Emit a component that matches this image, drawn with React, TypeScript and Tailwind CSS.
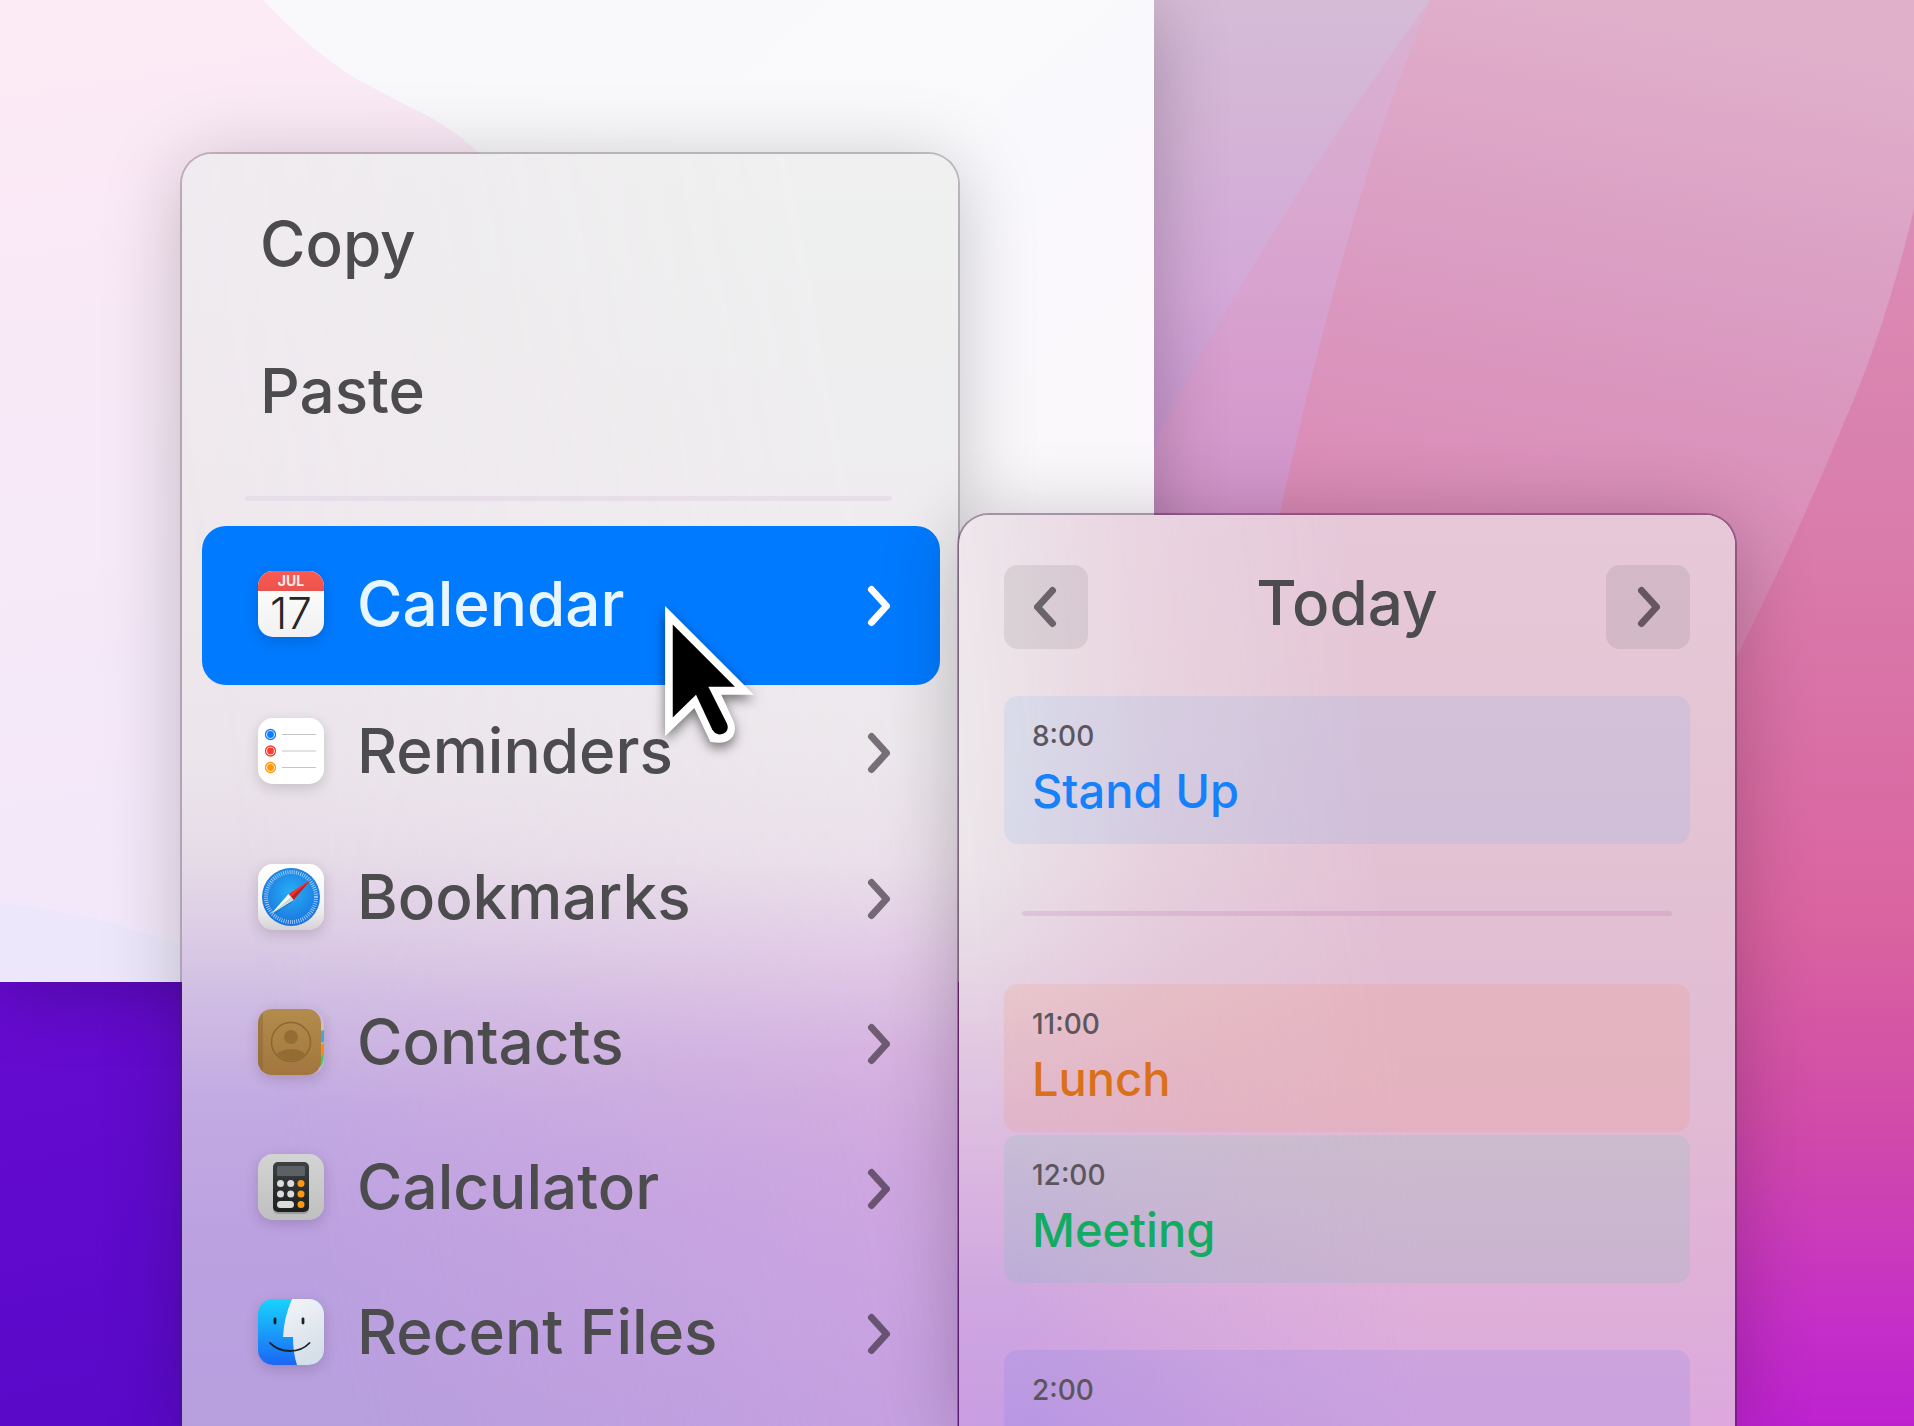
import type { ReactNode } from "react";
import clsx from "clsx";

type MenuEntry = {
  label: string;
  icon: ReactNode;
  active?: boolean;
  height: string;
};

type CalendarEvent = {
  time: string;
  title?: string;
  card: string;
  text: string;
};

const Chevron: React.FC<{ className?: string; flip?: boolean }> = ({
  className,
  flip,
}) => (
  <svg
    viewBox="0 0 24 42"
    className={clsx("h-[42px] w-6 shrink-0", className)}
    fill="none"
    stroke="currentColor"
    strokeWidth={7}
    strokeLinecap="round"
    strokeLinejoin="round"
    aria-hidden="true"
  >
    <path d={flip ? "M18.500 4.500 3.500 21l15 16.500" : "M5.500 4.500 20.500 21 5.500 37.500"} />
  </svg>
);

/* App icons */

const CalendarIcon = () => (
  <svg viewBox="0 0 66 66" className="size-full overflow-visible" aria-hidden="true">
    <defs>
      <clipPath id="cal-clip">
        <rect width="66" height="66" rx="15" />
      </clipPath>
      <linearGradient id="cal-paper" x1="0" y1="0" x2="0" y2="1">
        <stop offset="0" stopColor="#ffffff" />
        <stop offset="1" stopColor="#f1f1f1" />
      </linearGradient>
      <linearGradient id="cal-red" x1="0" y1="0" x2="0" y2="1">
        <stop offset="0" stopColor="#fb5a50" />
        <stop offset="1" stopColor="#e9544e" />
      </linearGradient>
    </defs>
    <g clipPath="url(#cal-clip)">
      <rect width="66" height="66" fill="url(#cal-paper)" />
      <rect width="66" height="20" fill="url(#cal-red)" />
    </g>
    <text x="33" y="15" textAnchor="middle" fontSize="14" fontWeight="700" fill="#fdeceb">
      JUL
    </text>
    <text x="33" y="58" textAnchor="middle" fontSize="44" fontWeight="300" fill="#262626">
      17
    </text>
  </svg>
);

const RemindersIcon = () => (
  <svg viewBox="0 0 66 66" className="size-full" aria-hidden="true">
    <rect width="66" height="66" rx="15" fill="#fff" />
    {[
      { y: 16.5, color: "#0a7cff" },
      { y: 33, color: "#fb3b30" },
      { y: 49.5, color: "#ff9706" },
    ].map(({ y, color }) => (
      <g key={color}>
        <circle cx="12.500" cy={y} r="5" fill="none" stroke={color} strokeWidth="1.300" />
        <circle cx="12.500" cy={y} r="3.400" fill={color} />
        <path d={`M24 ${y}H58`} stroke="#c3c5c5" strokeWidth="1.200" />
      </g>
    ))}
  </svg>
);

const SafariIcon = () => (
  <svg viewBox="0 0 66 66" className="size-full" aria-hidden="true">
    <defs>
      <linearGradient id="saf-bg" x1="0" y1="0" x2="0" y2="1">
        <stop offset="0" stopColor="#ffffff" />
        <stop offset="0.6" stopColor="#f4f4f4" />
        <stop offset="1" stopColor="#d6d3d8" />
      </linearGradient>
      <radialGradient id="saf-dial" cx="0.5" cy="0.42" r="0.6">
        <stop offset="0" stopColor="#25b0f5" />
        <stop offset="1" stopColor="#1b6fde" />
      </radialGradient>
    </defs>
    <rect width="66" height="66" rx="15" fill="url(#saf-bg)" />
    <circle cx="33" cy="33" r="29" fill="url(#saf-dial)" />
    <circle
      cx="33"
      cy="33"
      r="25"
      fill="none"
      stroke="#d9efff"
      strokeWidth="4"
      strokeDasharray="0.8 1.382"
      opacity="0.8"
    />
    <path d="M14 51 33 39 38 32 20 48z" fill="#0b3f86" opacity="0.35" />
    <path d="M52.500 16 30.500 30 35.500 36z" fill="#f2302c" />
    <path d="M52.500 16 33 33 35.500 36z" fill="#c4201f" />
    <path d="M13.500 49.500 30.500 30 35.500 36z" fill="#ffffff" />
    <path d="M13.500 49.500 33 33 35.500 36z" fill="#cfd6dc" />
  </svg>
);

const ContactsIcon = () => (
  <svg viewBox="0 0 66 66" className="size-full" aria-hidden="true">
    <defs>
      <linearGradient id="con-cover" x1="0" y1="0" x2="0" y2="1">
        <stop offset="0" stopColor="#b38c4d" />
        <stop offset="1" stopColor="#a2763e" />
      </linearGradient>
      <clipPath id="con-clip">
        <rect width="63" height="66" rx="14" />
      </clipPath>
      <clipPath id="con-ring">
        <circle cx="33" cy="33" r="18.500" />
      </clipPath>
    </defs>
    <path d="M56 12h6q3 2 4 9v28q-1 7-5 10h-5z" fill="#cfc2b4" />
    <path d="M60 23l6-2v12l-6 2z" fill="#3fa9dd" />
    <path d="M60 36l6-2v11l-6 3z" fill="#fb8c0a" />
    <path d="M60 48l6-3q0 9-4 13h-2z" fill="#42cf62" />
    <g clipPath="url(#con-clip)">
      <rect width="63" height="66" fill="url(#con-cover)" />
      <path d="M0 0h5v66H0z" fill="#7f5c29" opacity="0.35" />
    </g>
    <g clipPath="url(#con-ring)">
      <circle cx="33" cy="28" r="7" fill="#8c6830" opacity="0.8" />
      <ellipse cx="33" cy="49" rx="16" ry="9" fill="#8c6830" opacity="0.8" />
    </g>
    <circle cx="33" cy="33" r="19.500" fill="none" stroke="#8c6830" strokeWidth="1.500" />
  </svg>
);

const CalculatorIcon = () => (
  <svg viewBox="0 0 66 66" className="size-full" aria-hidden="true">
    <defs>
      <linearGradient id="calc-bg" x1="0" y1="0" x2="0" y2="1">
        <stop offset="0" stopColor="#d3d4d4" />
        <stop offset="1" stopColor="#c0bfc0" />
      </linearGradient>
      <linearGradient id="calc-body" x1="0" y1="0" x2="0" y2="1">
        <stop offset="0" stopColor="#3d4143" />
        <stop offset="1" stopColor="#1d1f20" />
      </linearGradient>
    </defs>
    <rect width="66" height="66" rx="15" fill="url(#calc-bg)" />
    <rect x="15" y="9" width="36" height="51" rx="5" fill="#000" opacity="0.2" />
    <rect x="15" y="8" width="36" height="50" rx="5" fill="url(#calc-body)" />
    <rect x="19" y="12" width="28" height="10" rx="1.500" fill="#5b6164" />
    {[29.5, 40].map((y) => (
      <g key={y}>
        <circle cx="22.500" cy={y} r="3.500" fill="#dcdcdc" />
        <circle cx="32.700" cy={y} r="3.500" fill="#dcdcdc" />
        <circle cx="43" cy={y} r="3.500" fill="#ff9a10" />
      </g>
    ))}
    <rect x="19" y="47" width="17" height="7" rx="3.500" fill="#dcdcdc" />
    <circle cx="43" cy="50.500" r="3.500" fill="#ff9a10" />
  </svg>
);

const FinderIcon = () => (
  <svg viewBox="0 0 66 66" className="size-full" aria-hidden="true">
    <defs>
      <clipPath id="fin-clip">
        <rect width="66" height="66" rx="15" />
      </clipPath>
      <linearGradient id="fin-blue" x1="0" y1="0" x2="0" y2="1">
        <stop offset="0" stopColor="#19d3fd" />
        <stop offset="1" stopColor="#1b66f5" />
      </linearGradient>
      <linearGradient id="fin-face" x1="0" y1="0" x2="0.300" y2="1">
        <stop offset="0" stopColor="#f4f4f7" />
        <stop offset="1" stopColor="#d5dfe9" />
      </linearGradient>
    </defs>
    <g clipPath="url(#fin-clip)">
      <rect width="66" height="66" fill="url(#fin-blue)" />
      <path d="M34 0Q26 18 25 38h10Q35 54 39 66h27V0z" fill="url(#fin-face)" />
    </g>
    <path
      d="M17 20v4M45 20v4"
      stroke="#18222c"
      strokeWidth="2.800"
      strokeLinecap="round"
    />
    <path
      d="M12 44Q20 52 32 52T51.500 44"
      fill="none"
      stroke="#18222c"
      strokeWidth="1.800"
      strokeLinecap="round"
    />
  </svg>
);

const editActions = ["Copy", "Paste"];

const menuEntries: MenuEntry[] = [
  { label: "Calendar", icon: <CalendarIcon />, active: true, height: "h-[159px]" },
  { label: "Reminders", icon: <RemindersIcon />, height: "h-[147px]" },
  { label: "Bookmarks", icon: <SafariIcon />, height: "h-[145px]" },
  { label: "Contacts", icon: <ContactsIcon />, height: "h-[145px]" },
  { label: "Calculator", icon: <CalculatorIcon />, height: "h-[145px]" },
  { label: "Recent Files", icon: <FinderIcon />, height: "h-[145px]" },
];

const morning: CalendarEvent[] = [
  { time: "8:00", title: "Stand Up", card: "bg-[#3c9cff]/10", text: "text-[#1681fb]" },
];

const midday: CalendarEvent[] = [
  { time: "11:00", title: "Lunch", card: "bg-[#ff7a38]/12", text: "text-[#d9701a]" },
  { time: "12:00", title: "Meeting", card: "bg-[#3cd0a0]/12", text: "text-[#12ab61]" },
];

const afternoon: CalendarEvent[] = [
  { time: "2:00", card: "bg-[#6e7aee]/15", text: "text-[#5856d6]" },
];

/* Desktop wallpaper */
const Wallpaper = () => (
  <svg
    viewBox="0 0 1914 1426"
    preserveAspectRatio="none"
    className="absolute inset-0 size-full"
    aria-hidden="true"
  >
    <defs>
      <linearGradient id="wp-lilac" x1="0" y1="0" x2="0" y2="1">
        <stop offset="0" stopColor="#d5bcd6" />
        <stop offset="0.2" stopColor="#d3a9d8" />
        <stop offset="0.36" stopColor="#c88fcd" />
        <stop offset="0.7" stopColor="#c24fc8" />
        <stop offset="1" stopColor="#9226cf" />
      </linearGradient>
      <linearGradient id="wp-wedge" x1="0" y1="0" x2="0" y2="1">
        <stop offset="0" stopColor="#dab2d2" />
        <stop offset="0.2" stopColor="#d8a3cf" />
        <stop offset="0.36" stopColor="#d294ca" />
        <stop offset="0.6" stopColor="#cf70b4" />
        <stop offset="1" stopColor="#a82ccb" />
      </linearGradient>
      <linearGradient id="wp-pink" x1="0.6" y1="0" x2="0.5" y2="1">
        <stop offset="0" stopColor="#e0b0cb" />
        <stop offset="0.17" stopColor="#db9fc4" />
        <stop offset="0.34" stopColor="#da8fb9" />
        <stop offset="0.6" stopColor="#d4719f" />
        <stop offset="0.8" stopColor="#cf5bb0" />
        <stop offset="1" stopColor="#bd2ecc" />
      </linearGradient>
      <linearGradient id="wp-rose" x1="0" y1="0" x2="0" y2="1">
        <stop offset="0" stopColor="#db8db6" />
        <stop offset="0.3" stopColor="#d97aaa" />
        <stop offset="0.58" stopColor="#da64a0" />
        <stop offset="0.75" stopColor="#d14ba9" />
        <stop offset="0.92" stopColor="#c52ec8" />
        <stop offset="1" stopColor="#bd22cf" />
      </linearGradient>
      <linearGradient id="wp-violet" x1="0" y1="0" x2="0.150" y2="1">
        <stop offset="0" stopColor="#6e0cd6" />
        <stop offset="1" stopColor="#5a09c9" />
      </linearGradient>
    </defs>
    <rect width="1914" height="1426" fill="url(#wp-lilac)" />
    <path d="M1430 0Q1270 220 1162 427 1080 640 1000 1426H1914V0z" fill="url(#wp-wedge)" />
    <path
      d="M1430 0Q1390 100 1370 165 1325 310 1280 512 1220 800 1140 1426H1914V0z"
      fill="url(#wp-pink)"
    />
    <path
      d="M1914 209Q1885 330 1845 420 1800 530 1740 650 1640 850 1500 1426H1914z"
      fill="url(#wp-rose)"
    />
    <rect y="700" width="500" height="726" fill="url(#wp-violet)" />
  </svg>
);

/* Light application window behind the menus */
const BackWindow = () => (
  <div className="absolute top-0 right-[760px] bottom-[444px] left-0 bg-[#f9f8fb] shadow-[0_10px_70px_rgba(0,0,0,0.24)]">
    <svg
      viewBox="0 0 1154 982"
      preserveAspectRatio="none"
      className="size-full"
      aria-hidden="true"
    >
      <defs>
        <linearGradient id="win-blob" x1="0.1" y1="0" x2="0.25" y2="1">
          <stop offset="0" stopColor="#fcebf4" />
          <stop offset="0.3" stopColor="#f9e9f7" />
          <stop offset="0.65" stopColor="#f5e9f9" />
          <stop offset="1" stopColor="#f2e8fa" />
        </linearGradient>
        <linearGradient id="win-base" x1="0" y1="0" x2="1" y2="1">
          <stop offset="0" stopColor="#f8f9fb" />
          <stop offset="0.6" stopColor="#faf8fc" />
          <stop offset="1" stopColor="#fbf6fa" />
        </linearGradient>
      </defs>
      <rect width="1154" height="982" fill="url(#win-base)" />
      <path
        d="M0 0H263Q310 50 355 78 392 98 428 116 460 134 478 152 620 290 700 600T900 982H0z"
        fill="url(#win-blob)"
      />
      <path d="M0 903Q90 912 180 945L320 982H0z" fill="#ede7fb" />
    </svg>
  </div>
);

const Cursor = () => (
  <svg
    viewBox="75 78 267 412"
    className="absolute top-[606px] left-[665px] h-[137px] w-[89px] overflow-visible drop-shadow-[0_5px_6px_rgba(0,0,0,0.5)]"
    aria-hidden="true"
  >
    <path
      d="M75 78 342 345H244L281 425Q290 448 279 470 266 489 240 489 224 489 211 486L163 385 75 470z"
      fill="#fff"
    />
    <path
      d="M98 134 285 321H205L261 431Q267 446 258 457 248 466 235 464 223 461 217 450L168 345 98 413z"
      fill="#000"
    />
  </svg>
);

/* Frosted glass tints: a base column of colour and one that fades in to the right */
const MenuGlass = () => (
  <>
    <div className="absolute inset-0 -z-10 rounded-[inherit] bg-[linear-gradient(to_bottom,#f0ebf0_0px,#efe9ed_346px,#ece6ec_600px,#e6dce8_700px,#dccce5_780px,#cfbce3_850px,#c2aae2_950px,#bca1e1_1080px,#b79fde_1272px)]" />
    <div className="absolute inset-0 -z-10 rounded-[inherit] bg-[linear-gradient(to_bottom,#eff0ef_0px,#eeecef_400px,#ece7ec_620px,#ebdfea_710px,#e2cbe6_800px,#d8b3e0_900px,#d1a8df_1000px,#c9a0e2_1272px)] mask-[linear-gradient(80deg,transparent_15%,black_85%)]" />
  </>
);

const PanelGlass = () => (
  <>
    <div className="absolute inset-0 -z-10 rounded-[inherit] bg-[linear-gradient(to_bottom,#efeaee_0px,#eee9ec_220px,#ece5ea_350px,#e8dbe6_430px,#e2c9e1_530px,#d8b4df_675px,#cfa7e1_785px,#c89de2_911px)]" />
    <div className="absolute inset-0 -z-10 rounded-[inherit] bg-[linear-gradient(to_bottom,#e6c8d9_0px,#e4c6d5_180px,#e2c0d3_400px,#e1bad3_600px,#dfb1d8_750px,#dca8dd_911px)] mask-[linear-gradient(84deg,transparent_8%,rgba(0,0,0,0.6)_30%,black_55%)]" />
  </>
);

const EventCard: React.FC<{ event: CalendarEvent }> = ({ event }) => (
  <li className={clsx("h-[148px] rounded-[14px] px-7 pt-6", event.card)}>
    <time className="block text-[28px] leading-8 font-medium text-[#5b565d]">
      {event.time}
    </time>
    {event.title && (
      <p className={clsx("mt-2.5 text-[47px] leading-[58px] font-medium", event.text)}>
        {event.title}
      </p>
    )}
  </li>
);

const ContextMenu = () => (
  <nav
    aria-label="Context menu"
    className="relative isolate rounded-t-[30px] pt-4 shadow-[0_0_0_2px_rgba(60,40,60,0.26),0_10px_80px_rgba(0,0,0,0.22)]"
  >
    <MenuGlass />
    {editActions.map((label) => (
      <button
        key={label}
        type="button"
        className="flex h-[147px] w-full items-center px-[78px] text-left text-[#4c4b4d]"
      >
        {label}
      </button>
    ))}
    <hr className="mr-[66px] ml-[63px] mt-8 mb-[25px] h-[5px] rounded-full border-0 bg-[#e6dfe9]" />
    {menuEntries.map(({ label, icon, active, height }) => (
      <div key={label} className={clsx("pr-[18px] pl-5", active && "-mb-2")}>
        <button
          type="button"
          aria-haspopup="true"
          className={clsx(
            "flex w-full items-center rounded-3xl pr-[50px] pl-14 text-left",
            height,
            active ? "bg-[#007aff] pb-1 text-[#e8f6ff]" : "text-[#4c4b4d]"
          )}
        >
          <span className="size-[66px] shrink-0 rounded-[15px] shadow-[0_4px_14px_rgba(0,0,0,0.16)]">
            {icon}
          </span>
          <span className="ml-[33px] flex-1 whitespace-nowrap">{label}</span>
          <Chevron className={clsx("mt-1", active ? "text-white" : "text-[#2a1e2a]/60")} />
        </button>
      </div>
    ))}
  </nav>
);

const TodayPanel = () => (
  <section
    aria-label="Today"
    className="relative isolate mt-[361px] rounded-t-[30px] px-[45px] pt-[50px] shadow-[0_0_0_2px_rgba(60,10,60,0.36),0_10px_80px_rgba(0,0,0,0.24)]"
  >
    <PanelGlass />
    <header className="flex items-center justify-between">
      <button
        type="button"
        aria-label="Previous day"
        className="flex size-[84px] items-center justify-center rounded-[14px] bg-[#3c3c3c]/10 text-[#6a636a]"
      >
        <Chevron flip />
      </button>
      <h2 className="pb-2 font-medium text-[#4c4b4d]">Today</h2>
      <button
        type="button"
        aria-label="Next day"
        className="flex size-[84px] items-center justify-center rounded-[14px] bg-[#3c3c3c]/10 text-[#67565f]"
      >
        <Chevron />
      </button>
    </header>
    <ul className="mt-[47px]">
      {morning.map((event) => (
        <EventCard key={event.time} event={event} />
      ))}
    </ul>
    <hr className="mx-[18px] mt-[67px] mb-[68px] h-[5px] rounded-full border-0 bg-[#9f47a3]/15" />
    <ul className="space-y-[3px]">
      {midday.map((event) => (
        <EventCard key={event.time} event={event} />
      ))}
    </ul>
    <ul className="mt-[67px]">
      {afternoon.map((event) => (
        <EventCard key={event.time} event={event} />
      ))}
    </ul>
  </section>
);

export default function App() {
  return (
    <main className="relative h-screen overflow-hidden font-['Inter',sans-serif]">
      <Wallpaper />
      <BackWindow />
      <div className="relative grid h-full grid-cols-2 grid-rows-1 gap-px pt-[154px] pr-[179px] pl-[182px] text-[62px] leading-[72px] font-medium">
        <ContextMenu />
        <TodayPanel />
      </div>
      <Cursor />
    </main>
  );
}
